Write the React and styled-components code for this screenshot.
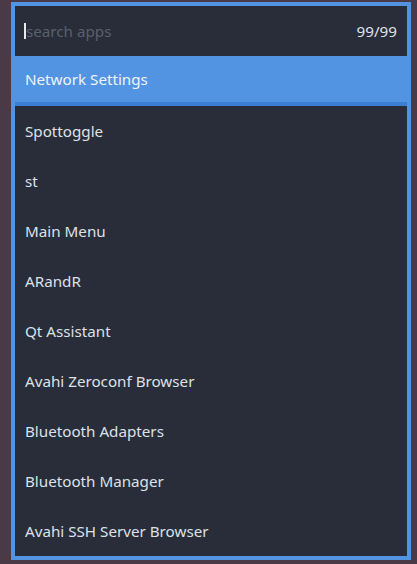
import React from "react";
import styled, { createGlobalStyle } from "styled-components";

const apps = [
  "Spottoggle",
  "st",
  "Main Menu",
  "ARandR",
  "Qt Assistant",
  "Avahi Zeroconf Browser",
  "Bluetooth Adapters",
  "Bluetooth Manager",
  "Avahi SSH Server Browser"
];

const App = () => {
  return (
    <>
      <Global />
      <Screen>
        <Launcher>
          <SearchBar>
            <Caret />
            <Placeholder>search apps</Placeholder>
            <Counter>99/99</Counter>
          </SearchBar>
          <Row selected>Network Settings</Row>
          <List>
            {apps.map(name => (
              <Row key={name}>{name}</Row>
            ))}
          </List>
        </Launcher>
      </Screen>
    </>
  );
};

export default App;

const Global = createGlobalStyle`
  html, body {
    margin: 0;
    padding: 0;
    background: #4a3a47;
  }
  * {
    box-sizing: border-box;
  }
`;

const Screen = styled.div`
  width: 417px;
  height: 564px;
  padding: 2px 6px 4px 11px;
  background: #4a3a47;
  font-family: "Noto Sans", "Open Sans", sans-serif;
`;

const Launcher = styled.div`
  width: 400px;
  height: 558px;
  border: 4px solid #5294e2;
  background: #282d39;
  display: flex;
  flex-direction: column;
`;

const SearchBar = styled.div`
  height: 50px;
  display: flex;
  align-items: center;
  padding: 0 10px 0 9px;
  font-size: 15.2px;
`;

const Caret = styled.span`
  width: 2px;
  height: 16px;
  background: #e6e9ef;
`;

const Placeholder = styled.span`
  color: #5a606c;
  flex: 1;
`;

const Counter = styled.span`
  color: #dfe3ea;
`;

const List = styled.div`
  display: flex;
  flex-direction: column;
`;

const Row = styled.div`
  height: 50px;
  display: flex;
  align-items: center;
  padding: 0 10px;
  font-size: 15.2px;
  color: ${props => (props.selected ? "#eef3fb" : "#dde1e8")};
  background: ${props => (props.selected ? "#5294e2" : "transparent")};
  border-bottom: ${props => (props.selected ? "4px solid #3a7fd4" : "none")};
`;
